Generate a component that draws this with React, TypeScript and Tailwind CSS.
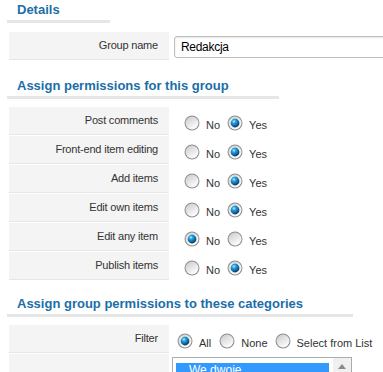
import { useId } from 'react'

function Radio({ checked = false, className = '' }: { checked?: boolean; className?: string }) {
  const id = useId().replace(/:/g, '')
  return (
    <svg width="16" height="16" viewBox="0 0 16 16" className={className}>
      <defs>
        <linearGradient id={`rim${id}`} x1="0" y1="0" x2="0.6" y2="1">
          <stop offset="0" stopColor="#c9c9c9" />
          <stop offset="1" stopColor="#fdfdfd" />
        </linearGradient>
        <radialGradient id={`dot${id}`} cx="0.38" cy="0.32" r="0.7">
          <stop offset="0" stopColor="#b8f0ff" />
          <stop offset="0.3" stopColor="#2aa2de" />
          <stop offset="0.75" stopColor="#0e5f9a" />
          <stop offset="1" stopColor="#07294d" />
        </radialGradient>
      </defs>
      <circle cx="8" cy="8" r="7.5" fill="#8e8f8f" />
      <circle cx="8" cy="8" r="6.5" fill={`url(#rim${id})`} />
      {checked && (
        <>
          <circle cx="8" cy="8" r="5.3" fill="#f4f4f4" />
          <circle cx="8" cy="8" r="4.4" fill={`url(#dot${id})`} />
        </>
      )}
    </svg>
  )
}

function Heading({ children, className = '' }: { children: React.ReactNode; className?: string }) {
  return (
    <div
      className={`ml-[7px] w-fit border-b-[3px] border-[#e6e6e6] pl-[10px] pr-[50px] pt-[2px] pb-[2px] text-[13px] leading-[16px] font-bold text-[#1b6ea9] ${className}`}
    >
      {children}
    </div>
  )
}

function Row({ label, children, valueClass = '' }: { label: string; children?: React.ReactNode; valueClass?: string }) {
  return (
    <div className="flex h-[28px]">
      <div className="flex w-[160px] shrink-0 items-center justify-end border-b border-[#e6e6e6] bg-[#f4f4f4] pr-[11px] tracking-[-0.2px]">
        {label}
      </div>
      <div className={`flex min-w-0 flex-1 items-start ${valueClass}`}>{children}</div>
    </div>
  )
}

function Option({ label, checked, className = '' }: { label: string; checked?: boolean; className?: string }) {
  return (
    <label className={`flex items-start ${className}`}>
      <Radio checked={checked} className="mt-[8px] shrink-0" />
      <span className="ml-[6px] mt-[12px] leading-[13px] whitespace-nowrap">{label}</span>
    </label>
  )
}

const permissions: { label: string; yes: boolean }[] = [
  { label: 'Post comments', yes: true },
  { label: 'Front-end item editing', yes: true },
  { label: 'Add items', yes: true },
  { label: 'Edit own items', yes: true },
  { label: 'Edit any item', yes: false },
  { label: 'Publish items', yes: true },
]

export default function App() {
  return (
    <div className="h-[372px] w-[383px] overflow-hidden bg-white font-['Liberation_Sans',Arial,sans-serif] text-[11px] text-[#333]">
      <Heading>Details</Heading>
      <div className="ml-[9px] mt-[9px]">
        <Row label="Group name" valueClass="pl-[5px]">
          <div className="mt-[4px] flex h-[22px] w-[260px] shrink-0 items-center rounded-[3px] border border-[#bdbdbd] bg-white pl-[6px] text-[12px] tracking-[-0.3px] text-black shadow-[inset_0_1px_2px_#e4e4e4]">
            Redakcja
          </div>
        </Row>
      </div>

      <Heading className="mt-[16px]">Assign permissions for this group</Heading>
      <div className="ml-[9px] mt-[8px] flex flex-col gap-px">
        {permissions.map((p) => (
          <Row key={p.label} label={p.label} valueClass="pl-[15px]">
            <Option label="No" checked={!p.yes} />
            <Option label="Yes" checked={p.yes} className="ml-[7px]" />
          </Row>
        ))}
      </div>

      <Heading className="mt-[14px]">Assign group permissions to these categories</Heading>
      <div className="ml-[9px] mt-[8px] flex flex-col gap-px">
        <Row label="Filter" valueClass="pl-[8px]">
          <Option label="All" checked />
          <Option label="None" className="ml-[8px]" />
          <Option label="Select from List" className="ml-[7px]" />
        </Row>
        <div className="flex h-[40px]">
          <div className="w-[160px] shrink-0 bg-[#f4f4f4]" />
          <div className="pl-[3px] pt-[3px]">
            <div className="flex h-[40px] w-[180px] border border-[#a9acb0] bg-white">
              <div className="flex-1 pl-[3px] pt-[5px]">
                <div className="h-[15px] bg-[#3399ff] pl-[13px] text-[12px] leading-[15px] text-white">
                  We dwoje
                </div>
              </div>
              <div className="ml-[4px] flex w-[18px] justify-center bg-[#f0f0f0] pt-[6px]">
                <svg width="8" height="5" viewBox="0 0 8 5">
                  <path d="M0 5 L4 0 L8 5 Z" fill="#8a8a8a" />
                </svg>
              </div>
            </div>
          </div>
        </div>
      </div>
    </div>
  )
}
